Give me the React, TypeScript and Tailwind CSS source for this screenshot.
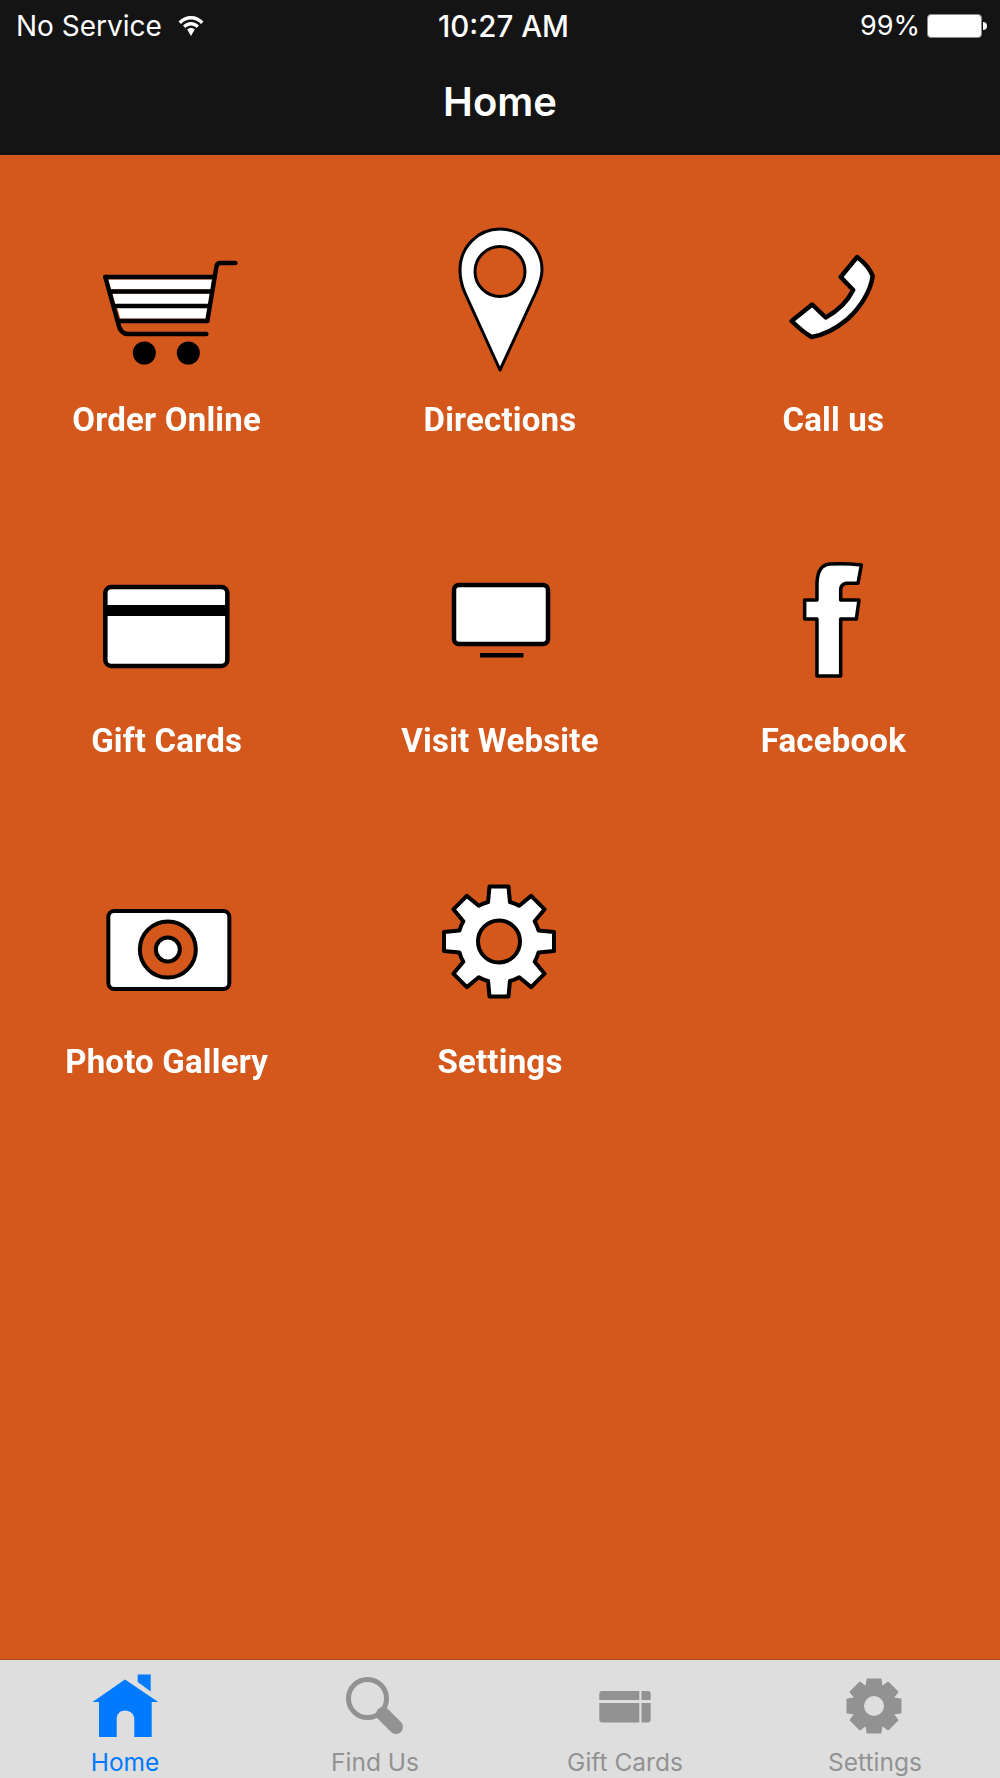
import type { ReactNode } from 'react';

const ORANGE = '#d4571b';

// builds a cog outline: n square teeth joined by arcs on the body radius
function gearPath(cx: number, cy: number, outer: number, body: number, toothWidth: number, n = 8) {
  const half = toothWidth / 2;
  const baseHalf = half * 1.15;
  const baseLen = Math.sqrt(body * body - baseHalf * baseHalf);
  const parts: string[] = [];
  for (let i = 0; i < n; i++) {
    const a = (i * 2 * Math.PI) / n - Math.PI / 2;
    const ux = Math.cos(a);
    const uy = Math.sin(a);
    const vx = -uy;
    const vy = ux;
    const pts = [
      [cx + ux * baseLen - vx * baseHalf, cy + uy * baseLen - vy * baseHalf],
      [cx + ux * outer - vx * half, cy + uy * outer - vy * half],
      [cx + ux * outer + vx * half, cy + uy * outer + vy * half],
      [cx + ux * baseLen + vx * baseHalf, cy + uy * baseLen + vy * baseHalf],
    ];
    if (i === 0) {
      parts.push(`M${pts[0][0].toFixed(2)} ${pts[0][1].toFixed(2)}`);
    } else {
      parts.push(`A${body} ${body} 0 0 1 ${pts[0][0].toFixed(2)} ${pts[0][1].toFixed(2)}`);
    }
    parts.push(`L${pts[1][0].toFixed(2)} ${pts[1][1].toFixed(2)}`);
    parts.push(`L${pts[2][0].toFixed(2)} ${pts[2][1].toFixed(2)}`);
    parts.push(`L${pts[3][0].toFixed(2)} ${pts[3][1].toFixed(2)}`);
  }
  const sx = cx - baseHalf;
  const sy = cy - baseLen;
  parts.push(`A${body} ${body} 0 0 1 ${sx.toFixed(2)} ${sy.toFixed(2)}Z`);
  return parts.join(' ');
}

function holePath(cx: number, cy: number, r: number) {
  return `M${cx - r} ${cy} A${r} ${r} 0 1 0 ${cx + r} ${cy} A${r} ${r} 0 1 0 ${cx - r} ${cy}Z`;
}

function Cart() {
  return (
    <>
      <polygon points="107.500,279.500 211.700,279.500 210.500,289.500 110.500,289.500" fill="#fff" />
      <polygon points="112,293.500 209.500,293.500 208.500,304 115,304" fill="#fff" />
      <polygon points="117,308 207.500,308 206,318.500 120,318.500" fill="#fff" />
      <g fill="none" stroke="#000" strokeWidth="4.500" strokeLinecap="round" strokeLinejoin="round">
        <path d="M235 263H220Q216.500 263 216 267L207 321" />
        <path d="M105 277H214" />
        <path d="M105 277L118 324Q120 334 128 334H206" />
        <path d="M110.500 291.500H210" />
        <path d="M115 306H208" />
        <path d="M119 321H207" />
      </g>
      <circle cx="144" cy="353" r="11.500" fill="#000" />
      <circle cx="188" cy="353" r="11.500" fill="#000" />
    </>
  );
}

function Pin() {
  return (
    <>
      <path
        d="M500 370L465 293C461.500 285 460 279 460 270C460 247 478 229 500 229C522 229 542 247 542 270C542 279 539 285 535.500 293Z"
        fill="#fff"
        stroke="#000"
        strokeWidth="3"
        strokeLinejoin="round"
      />
      <circle cx="500" cy="271.500" r="25" fill={ORANGE} stroke="#000" strokeWidth="3" />
    </>
  );
}

function Phone() {
  return (
    <path
      d="M792 321L812.500 304.500L826 317.500C838 311 848 301 853.500 290L841 277L857.500 257C864 262 870 268 873 276C871 292 860 308 848 319C836 329 824 335 812 337C805 333 798 327 792 321Z"
      fill="#fff"
      stroke="#000"
      strokeWidth="4.500"
      strokeLinejoin="round"
    />
  );
}

function Card() {
  return (
    <>
      <rect x="105" y="587" width="122" height="79" rx="6" fill="#fff" stroke="#000" strokeWidth="4.500" />
      <rect x="105" y="605" width="122" height="11" fill="#000" />
    </>
  );
}

function Monitor() {
  return (
    <>
      <rect x="454" y="585" width="94" height="59" rx="5" fill="#fff" stroke="#000" strokeWidth="4.500" />
      <rect x="480" y="653" width="43.500" height="4.500" fill="#000" />
    </>
  );
}

function FacebookF() {
  return (
    <path
      d="M861.700 565L858.300 583.300H846.700Q841 584.300 841 590V600H859.300L856.700 619H841V676H817.300V619H805V600H817.300V583Q818 565 830 564Q846 563 861.700 565Z"
      fill="#fff"
      stroke="#000"
      strokeWidth="3.500"
      strokeLinejoin="round"
    />
  );
}

function Camera() {
  return (
    <>
      <rect x="108" y="911" width="121" height="78" rx="6" fill="#fff" stroke="#000" strokeWidth="4" />
      <circle cx="167.500" cy="949.500" r="28" fill={ORANGE} stroke="#000" strokeWidth="4" />
      <circle cx="167.500" cy="949.500" r="12" fill="#fff" stroke="#000" strokeWidth="4" />
    </>
  );
}

function Cog() {
  return (
    <>
      <path
        d={gearPath(499, 941.5, 55, 41, 19)}
        fill="#fff"
        stroke="#000"
        strokeWidth="4"
        strokeLinejoin="round"
      />
      <circle cx="499" cy="941.500" r="21" fill={ORANGE} stroke="#000" strokeWidth="4" />
    </>
  );
}

type Item = { label: string; box: string; icon: ReactNode };

const items: Item[] = [
  { label: 'Order Online', box: '66.67 215 200 180', icon: <Cart /> },
  { label: 'Directions', box: '400 215 200 180', icon: <Pin /> },
  { label: 'Call us', box: '733.33 215 200 180', icon: <Phone /> },
  { label: 'Gift Cards', box: '66.67 536 200 180', icon: <Card /> },
  { label: 'Visit Website', box: '400 536 200 180', icon: <Monitor /> },
  { label: 'Facebook', box: '733.33 536 200 180', icon: <FacebookF /> },
  { label: 'Photo Gallery', box: '66.67 857 200 180', icon: <Camera /> },
  { label: 'Settings', box: '400 857 200 180', icon: <Cog /> },
];

function StatusBar() {
  return (
    <div className="h-[50px] grid grid-cols-3 items-center pl-4 pr-[13px] pt-[2px] text-white font-['Inter',sans-serif]">
      <div className="flex items-center gap-[16px] text-[28px]">
        <span>No Service</span>
        <svg viewBox="0 0 26 22" className="w-[26px] h-[22px] fill-white">
          <path d="M13 1C8 1 4 3 0.500 6.500L3 9C5.500 6.300 9 4.600 13 4.600C17 4.600 20.500 6.300 23 9L25.500 6.500C22 3 18 1 13 1Z" />
          <path d="M13 7C10 7 7.300 8.300 5 10.500L7.300 13C8.800 11.500 10.800 10.500 13 10.500C15.200 10.500 17.200 11.500 18.700 13L21 10.500C18.700 8.300 16 7 13 7Z" />
          <path d="M13 13C11.500 13 10.300 13.500 9.300 14.500L13 21L16.700 14.500C15.700 13.500 14.500 13 13 13Z" />
        </svg>
      </div>
      <div className="text-center font-medium text-[29.5px] pl-[4px]">10:27 AM</div>
      <div className="flex items-center justify-end gap-[7px] text-[27px]">
        <span>99%</span>
        <div className="flex items-center gap-[1px]">
          <div className="w-[55px] h-[24px] rounded-[4px] bg-white border border-[#8a8a8a]" />
          <div className="w-[4px] h-[8px] rounded-r-full bg-white" />
        </div>
      </div>
    </div>
  );
}

function Tab({ label, active, children }: { label: string; active?: boolean; children: ReactNode }) {
  return (
    <div className="flex flex-col items-center">
      <svg viewBox="0 0 80 74" className={`w-[80px] h-[74px] mt-[13px] blur-[0.4px] ${active ? 'text-[#007aff]' : 'text-[#929292]'}`}>
        {children}
      </svg>
      <span className={`text-[24.5px] leading-[30px] ${active ? 'text-[#007aff]' : 'text-[#929292]'}`}>{label}</span>
    </div>
  );
}

export default function App() {
  return (
    <div className="w-[1000px] h-[1778px] flex flex-col overflow-hidden font-['Inter',sans-serif]">
      <div className="h-[155px] bg-[#141414]">
        <StatusBar />
        <div className="h-[105px] flex items-center justify-center pb-[2px] text-white text-[40px] font-semibold">Home</div>
      </div>

      <div className="flex-1 bg-[#d4571b] pt-[60px]">
        <div className="grid grid-cols-3 auto-rows-[321px]">
          {items.map((item) => (
            <div key={item.label} className="flex flex-col items-center">
              <svg viewBox={item.box} className="w-[200px] h-[180px] blur-[0.4px]">
                {item.icon}
              </svg>
              <div className="mt-[5px] h-10 leading-10 text-[33px] tracking-[0.2px] font-bold text-white font-['Roboto',sans-serif] blur-[0.3px]">
                {item.label}
              </div>
            </div>
          ))}
        </div>
      </div>

      <div className="h-[119px] bg-[#dedede] border-t border-[#b0491a] grid grid-cols-4">
        <Tab label="Home" active>
          <g fill="currentColor">
            <path d="M40 6.500L7.500 29H14V64H31.700V46C31.700 41 35 37.500 40 37.500C45 37.500 49.300 41 49.300 46V64H66.700V29H73.300Z" />
            <path d="M52.700 1.500H65.700V18.500L52.700 9Z" />
          </g>
        </Tab>
        <Tab label="Find Us">
          <circle cx="32.500" cy="25.500" r="19" fill="none" stroke="currentColor" strokeWidth="5" />
          <path d="M48 41L61 54" stroke="currentColor" strokeWidth="14" strokeLinecap="round" />
        </Tab>
        <Tab label="Gift Cards">
          <g fill="currentColor">
            <path d="M14.300 21Q14.300 18 17.300 18H54.300V27H14.300Z" />
            <path d="M14.300 30H54.300V49.500H17.300Q14.300 49.500 14.300 46.500Z" />
            <path d="M56.500 18H62.700Q65.700 18 65.700 21V27H56.500Z" />
            <path d="M56.500 30H65.700V46.500Q65.700 49.500 62.700 49.500H56.500Z" />
          </g>
        </Tab>
        <Tab label="Settings">
          <path
            d={gearPath(39, 33, 26.5, 21, 13) + ' ' + holePath(39, 33, 11)}
            fill="currentColor"
            stroke="currentColor"
            strokeWidth="2"
            strokeLinejoin="round"
            fillRule="evenodd"
          />
        </Tab>
      </div>
    </div>
  );
}
